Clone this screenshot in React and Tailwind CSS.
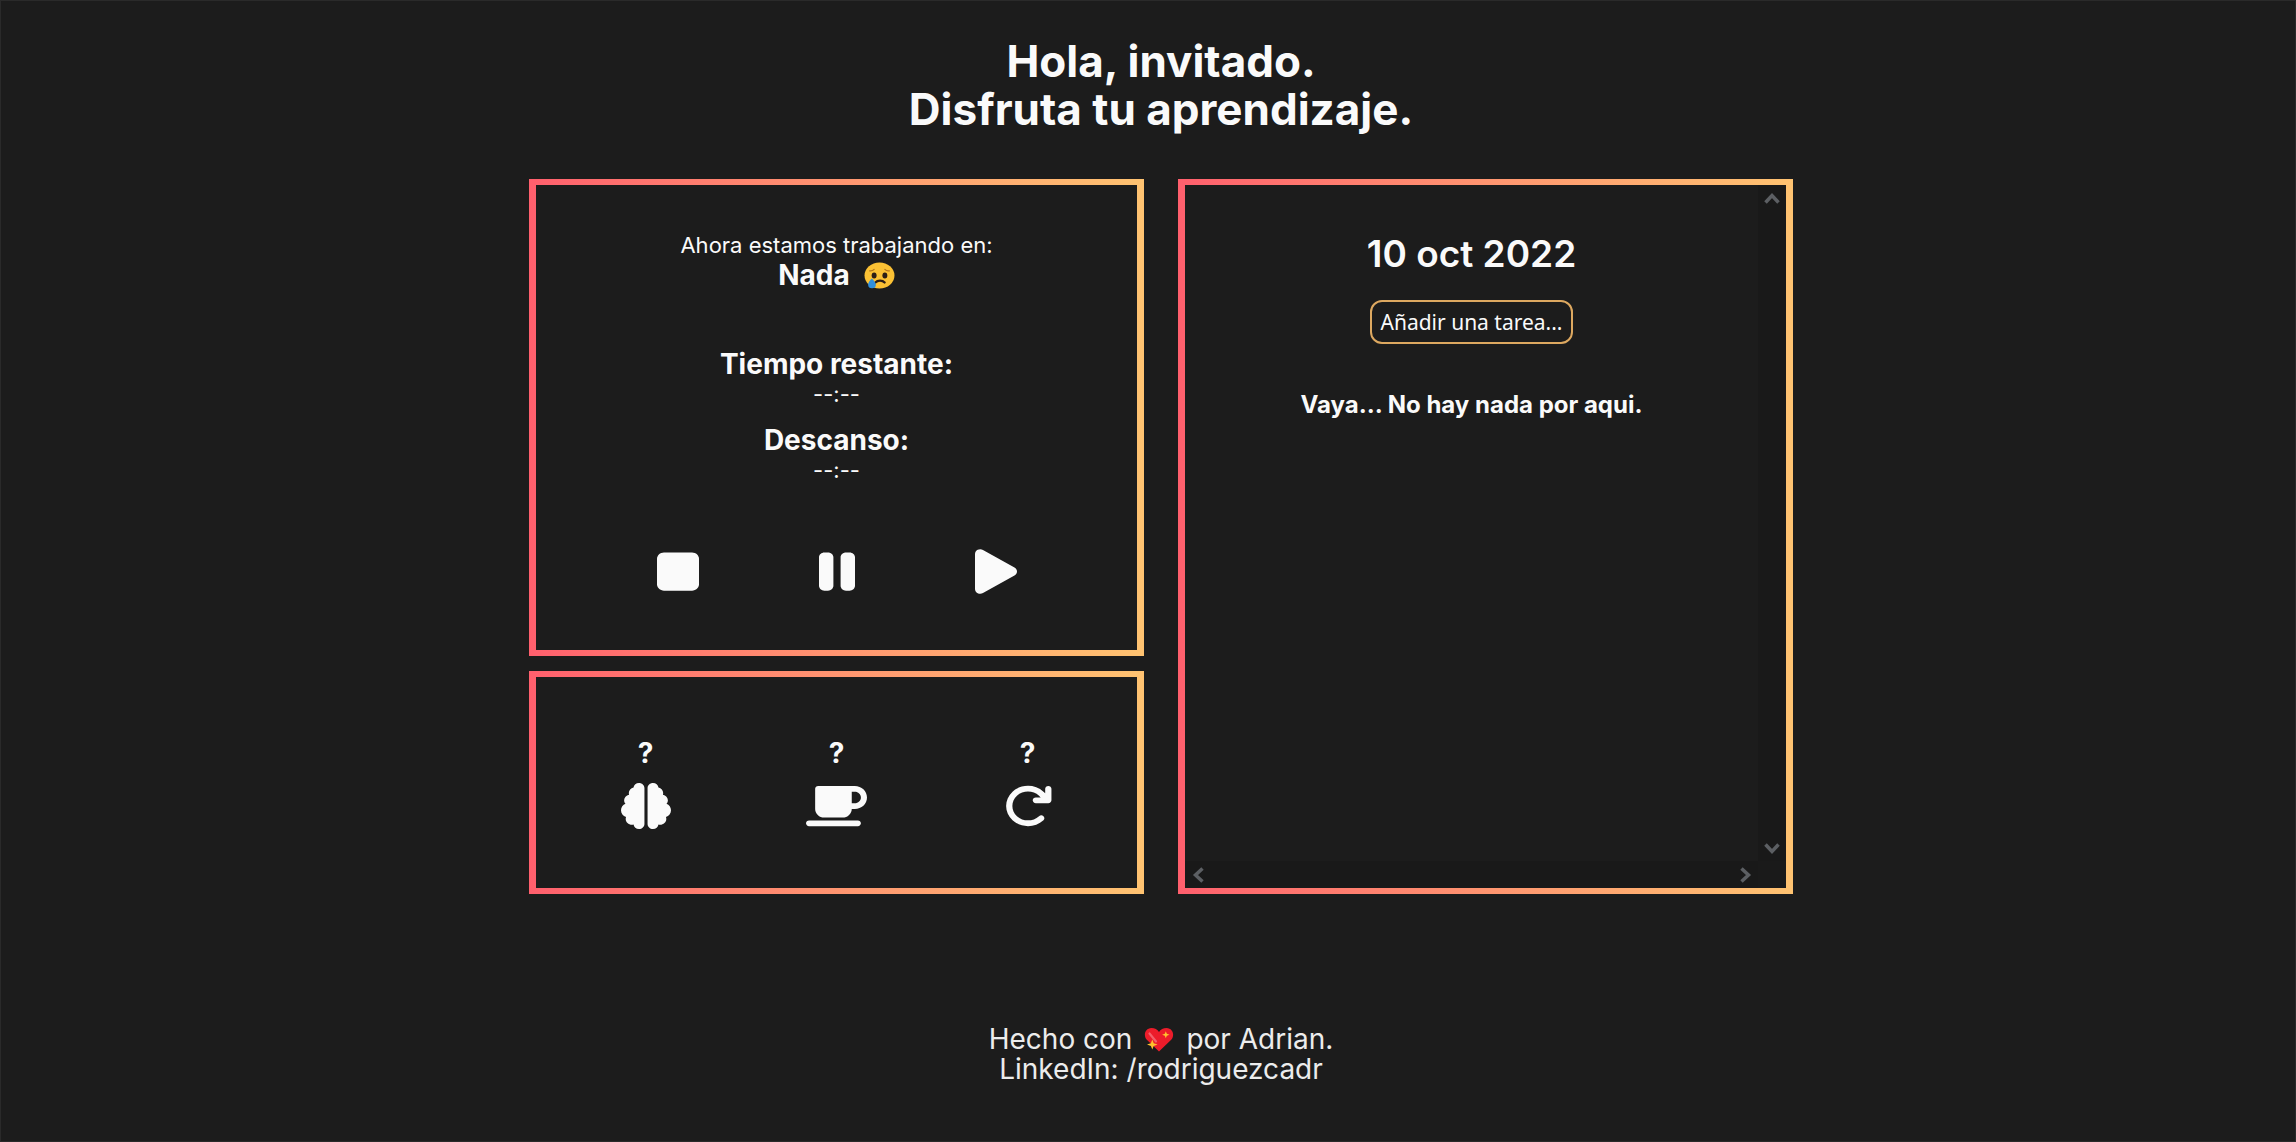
import { FaStop, FaPause, FaPlay, FaBrain, FaMugSaucer, FaArrowRotateRight } from "react-icons/fa6";

function Panel({ className = "", children }) {
  return (
    <div className="flex bg-gradient-to-r from-[#ff5f6d] to-[#ffc371] px-[7px] py-[6px]">
      <div className={`w-full bg-[#1c1c1c] ${className}`}>{children}</div>
    </div>
  );
}

function SadFace() {
  return (
    <svg viewBox="0 0 30 27" preserveAspectRatio="none" className="h-[27px] w-[31px]" role="img" aria-label="triste">
      <ellipse cx="15" cy="13.5" rx="14.5" ry="13" fill="#fbc134" />
      <path d="M5.5 8.8c1.8.3 3.3-.3 4.3-1.4M24.5 8.8c-1.8.3-3.3-.3-4.3-1.4" stroke="#b5781c" strokeWidth="1.3" fill="none" strokeLinecap="round" />
      <ellipse cx="9.8" cy="13.5" rx="2.4" ry="2.9" fill="#2c1e16" />
      <ellipse cx="20.2" cy="13.5" rx="2.4" ry="2.9" fill="#2c1e16" />
      <path d="M11 20.5c2.2-2.6 6.8-2.6 9 0" stroke="#2c1e16" strokeWidth="2.2" fill="none" strokeLinecap="round" />
      <path d="M7.5 16.5c2.6 2.6 4 4.4 4 6.3a3.7 3.5 0 0 1-7.5 0c0-1.9 1.3-3.8 3.5-6.3z" fill="#2f8fdc" />
    </svg>
  );
}

function SparklingHeart() {
  return (
    <svg viewBox="0 0 30 25" preserveAspectRatio="none" className="h-[25px] w-[30px]" role="img" aria-label="amor">
      <path d="M15 24.5 2.8 12.8C-.8 9 .6 1.2 7.5 1c3.3 0 5.9 1.5 7.5 4 1.6-2.5 4.2-4 7.5-4 6.9.2 8.3 8 4.7 11.8z" fill="#ec1c2a" />
      <path d="m5.5 6.5 6.5 8" stroke="#f2606a" strokeWidth="2.2" strokeLinecap="round" />
      <path d="m21.8 4.2 1 2.6 2.7.9-2.7 1-1 2.6-1-2.6-2.7-1 2.7-.9z" fill="#ffc02e" />
      <path d="m8.3 12.5 1.4 3.7 3.9 1.3-3.9 1.4-1.4 3.7-1.4-3.7L3 17.5l3.9-1.3z" fill="#ffc02e" />
    </svg>
  );
}

function Chevron({ d, label }) {
  return (
    <button type="button" aria-label={label} className="flex size-[27px] items-center justify-center">
      <svg viewBox="0 0 16 16" className="size-4" fill="none" stroke="#5c5f63" strokeWidth="3.5">
        <path d={d} />
      </svg>
    </button>
  );
}

const controls = [
  { label: "Detener", Icon: FaStop, size: "h-[51px] w-[42px]" },
  { label: "Pausar", Icon: FaPause, size: "h-[51px] w-[36px]" },
  { label: "Iniciar", Icon: FaPlay, size: "h-[51px] w-[42px]" },
];

const settings = [
  { label: "Concentración", Icon: FaBrain, size: "h-[46px] w-[50px]" },
  { label: "Descanso", Icon: FaMugSaucer, size: "h-[46px] w-[61px]" },
  { label: "Repeticiones", Icon: FaArrowRotateRight, size: "h-[46px] w-[50px]" },
];

export default function App() {
  return (
    <div className="min-h-screen border border-[#2a2a2a] bg-[#1c1c1c] pl-[26px] text-center font-['Inter',sans-serif] text-[#fafafa]">
      <h1 className="pt-9 text-[44px] leading-[48px] font-bold">
        Hola, invitado.
        <br />
        Disfruta tu aprendizaje.
      </h1>

      <main className="mx-auto mt-[46px] grid w-full max-w-[1264px] grid-cols-2 gap-[34px]">
        <div className="flex flex-col gap-[15px]">
          <Panel className="pt-[45px] pb-[53px]">
            <p className="text-[22px] leading-[30px]">Ahora estamos trabajando en:</p>
            <h2 className="flex items-center justify-center gap-[14px] text-[28px] leading-[30px] font-bold">
              Nada <SadFace />
            </h2>
            <h2 className="mt-[59px] text-[28px] leading-[30px] font-bold">Tiempo restante:</h2>
            <p className="text-[22px] leading-[30px]">--:--</p>
            <h2 className="mt-4 text-[28px] leading-[30px] font-bold">Descanso:</h2>
            <p className="text-[22px] leading-[30px]">--:--</p>
            <div className="mt-[61px] grid grid-cols-3 px-[62px]">
              {controls.map(({ label, Icon, size }) => (
                <button key={label} type="button" aria-label={label} className="flex justify-center">
                  <Icon className={size} preserveAspectRatio="none" />
                </button>
              ))}
            </div>
          </Panel>

          <Panel className="grid grid-cols-3 px-[14px] pt-[61px] pb-[59px]">
            {settings.map(({ label, Icon, size }) => (
              <div key={label} className="flex flex-col items-center gap-[15px]">
                <span className="text-[28px] leading-[30px] font-bold">?</span>
                <button type="button" aria-label={label}>
                  <Icon className={size} preserveAspectRatio="none" />
                </button>
              </div>
            ))}
          </Panel>
        </div>

        <Panel className="grid grid-cols-[1fr_28px] grid-rows-[1fr_27px]">
          <section className="flex flex-col items-center pt-[47px]">
            <h2 className="text-[37px] leading-[44px] font-semibold">10 oct 2022</h2>
            <button
              type="button"
              className="mt-6 h-[44px] rounded-xl border-2 border-[#dda860] px-[9px] font-['Noto_Sans',sans-serif] text-[21px] leading-[30px]"
            >
              Añadir una tarea...
            </button>
            <p className="mt-[46px] text-[24px] leading-[30px] font-bold">Vaya... No hay nada por aqui.</p>
          </section>
          <div className="flex flex-col items-center justify-between bg-[#191919]">
            <Chevron label="Subir" d="M1.5 11.5 8 4.5l6.5 7" />
            <Chevron label="Bajar" d="M1.5 4.5 8 11.5l6.5-7" />
          </div>
          <div className="flex items-center justify-between bg-[#191919]">
            <Chevron label="Izquierda" d="M11.5 1.5 4.5 8l7 6.5" />
            <Chevron label="Derecha" d="M4.5 1.5 11.5 8l-7 6.5" />
          </div>
          <div className="bg-[#1a1a1a]" />
        </Panel>
      </main>

      <footer className="mt-[130px] pb-14 text-[28px] leading-[30px] text-[#ececec]">
        <p className="flex items-center justify-center gap-3">
          Hecho con <SparklingHeart /> por Adrian.
        </p>
        <p>
          LinkedIn: <a href="https://www.linkedin.com/in/rodriguezcadr">/rodriguezcadr</a>
        </p>
      </footer>
    </div>
  );
}
